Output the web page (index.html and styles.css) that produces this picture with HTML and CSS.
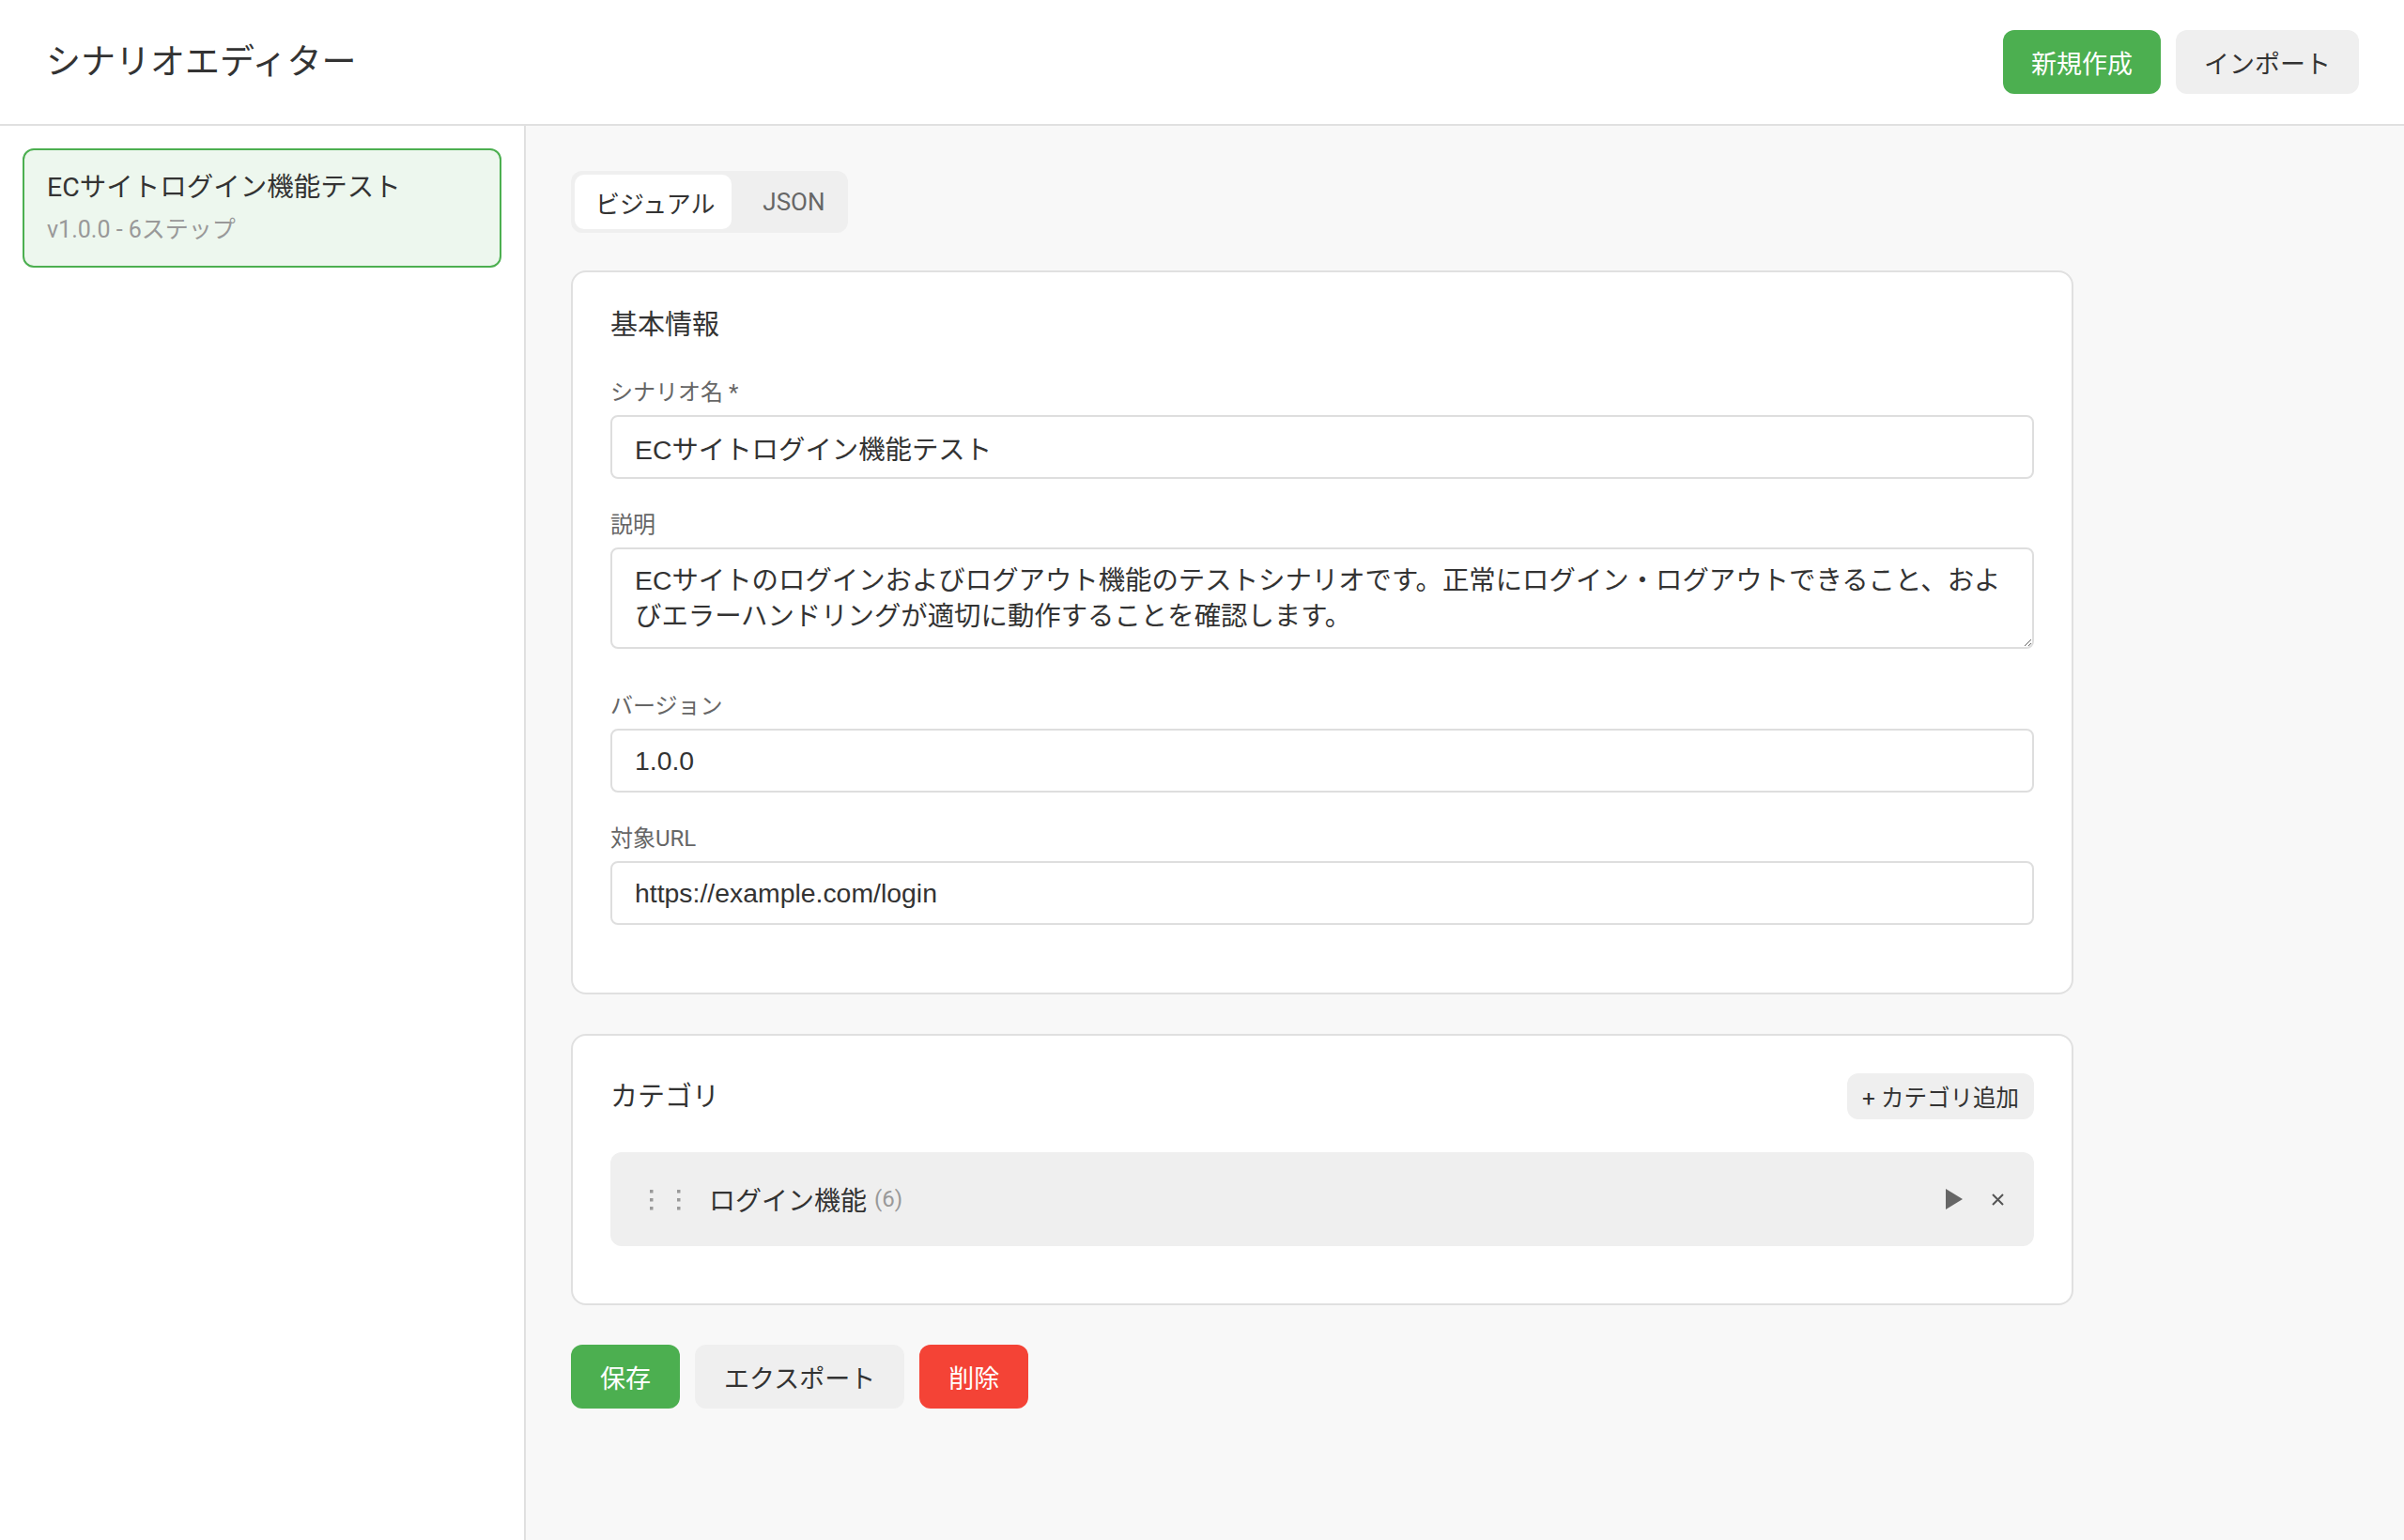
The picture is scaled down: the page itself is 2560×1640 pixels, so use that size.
FILE: index.html
```html
<!DOCTYPE html>
<html lang="ja">
<head>
<meta charset="utf-8">
<title>シナリオエディター</title>
<link rel="stylesheet" href="styles.css">
</head>
<body>
<header class="topbar">
  <h1 class="app-title">シナリオエディター</h1>
  <div class="topbar-actions">
    <button class="btn btn-primary btn-top">新規作成</button>
    <button class="btn btn-secondary btn-top">インポート</button>
  </div>
</header>
<div class="layout">
  <aside class="sidebar">
    <div class="scenario-item active">
      <div class="scenario-name">ECサイトログイン機能テスト</div>
      <div class="scenario-meta">v1.0.0 - 6ステップ</div>
    </div>
  </aside>
  <main class="editor">
    <div class="tabs">
      <button class="tab active">ビジュアル</button>
      <button class="tab tab-json">JSON</button>
    </div>

    <section class="card">
      <h2 class="card-title">基本情報</h2>
      <div class="form-group">
        <label class="form-label">シナリオ名 *</label>
        <input class="form-input" type="text" value="ECサイトログイン機能テスト">
      </div>
      <div class="form-group form-group-text">
        <label class="form-label">説明</label>
        <textarea class="form-input form-textarea">ECサイトのログインおよびログアウト機能のテストシナリオです。正常にログイン・ログアウトできること、およびエラーハンドリングが適切に動作することを確認します。</textarea>
      </div>
      <div class="form-group">
        <label class="form-label">バージョン</label>
        <input class="form-input" type="text" value="1.0.0">
      </div>
      <div class="form-group">
        <label class="form-label">対象URL</label>
        <input class="form-input" type="text" value="https://example.com/login">
      </div>
    </section>

    <section class="card">
      <div class="card-header">
        <h2 class="card-title card-title-inline">カテゴリ</h2>
        <button class="btn-small">+ カテゴリ追加</button>
      </div>
      <div class="category-item">
        <svg class="drag-handle" width="36" height="26" viewBox="0 0 36 26" aria-hidden="true">
          <rect x="1" y="3" width="3.5" height="3.5" fill="#9a9a9a"/>
          <rect x="1" y="12" width="3.5" height="3.5" fill="#9a9a9a"/>
          <rect x="1" y="21" width="3.5" height="3.5" fill="#9a9a9a"/>
          <rect x="30" y="3" width="3.5" height="3.5" fill="#9a9a9a"/>
          <rect x="30" y="12" width="3.5" height="3.5" fill="#9a9a9a"/>
          <rect x="30" y="21" width="3.5" height="3.5" fill="#9a9a9a"/>
        </svg>
        <span class="category-name">ログイン機能</span>
        <span class="category-count">(6)</span>
        <span class="spacer"></span>
        <button class="icon-btn play-btn" aria-label="実行">
          <svg width="18" height="22" viewBox="0 0 18 22"><polygon points="0,0 18,11 0,22" fill="#666"/></svg>
        </button>
        <button class="icon-btn close-btn" aria-label="削除">
          <svg width="13" height="13" viewBox="0 0 13 13"><path d="M1 1 L12 12 M12 1 L1 12" stroke="#555" stroke-width="2" fill="none"/></svg>
        </button>
      </div>
    </section>

    <div class="actions">
      <button class="btn btn-primary">保存</button>
      <button class="btn btn-secondary">エクスポート</button>
      <button class="btn btn-danger">削除</button>
    </div>
  </main>
</div>
</body>
</html>
```

FILE: styles.css
```css
* {
  box-sizing: border-box;
}

html, body {
  margin: 0;
  padding: 0;
  height: 100%;
}

body {
  font-family: "Roboto", "Noto Sans CJK JP", sans-serif;
  color: #333;
  background: #f8f8f8;
  display: flex;
  flex-direction: column;
}

button {
  font-family: inherit;
  cursor: pointer;
}

.topbar {
  flex: 0 0 auto;
  height: 134px;
  padding: 0 48px 0 49px;
  background: #fff;
  border-bottom: 2px solid #e0e0e0;
  display: flex;
  align-items: center;
  justify-content: space-between;
}

.app-title {
  margin: 0 0 6px;
  font-size: 37px;
  font-weight: 400;
  color: #333;
}

.topbar-actions {
  display: flex;
  gap: 16px;
}

.btn {
  height: 68px;
  padding: 0 31px;
  font-size: 27px;
  border: none;
  border-radius: 12px;
  color: #333;
}

.btn-top {
  padding: 0 30px;
}

.btn-primary {
  background: #4caf50;
  color: #fff;
}

.btn-secondary {
  background: #efefef;
  color: #333;
}

.btn-danger {
  background: #f44336;
  color: #fff;
}

.layout {
  flex: 1 1 auto;
  display: flex;
  min-height: 0;
}

.sidebar {
  flex: 0 0 560px;
  background: #fff;
  border-right: 2px solid #e0e0e0;
  padding: 24px;
}

.scenario-item {
  border: 2px solid #e0e0e0;
  border-radius: 12px;
  padding: 20px 24px 21px;
}

.scenario-item.active {
  border-color: #4caf50;
  background: #edf7ee;
}

.scenario-name {
  font-size: 28.5px;
  line-height: 40px;
  color: #333;
}

.scenario-meta {
  margin-top: 7px;
  font-size: 25px;
  line-height: 35px;
  color: #999;
}

.editor {
  flex: 1 1 auto;
  padding: 48px;
  background: #f8f8f8;
}

.tabs {
  display: inline-flex;
  gap: 4px;
  padding: 4px;
  background: #efefef;
  border-radius: 12px;
  margin-bottom: 40px;
}

.tab {
  height: 58px;
  padding: 0 18px 0 22px;
  font-size: 26px;
  border: none;
  border-radius: 10px;
  background: transparent;
  color: #666;
}

.tab-json {
  width: 116px;
  padding: 0 0 0 8px;
}

.tab.active {
  background: #fff;
  color: #333;
}

.card {
  width: 1600px;
  background: #fff;
  border: 2px solid #e0e0e0;
  border-radius: 16px;
  padding: 40px;
  margin-bottom: 42px;
}

.card-title {
  margin: 0 0 39px;
  font-size: 29px;
  line-height: 32px;
  font-weight: 400;
  color: #333;
}

.card-title-inline {
  margin: 0;
}

.form-group {
  margin-bottom: 32px;
}

.form-group-text {
  margin-bottom: 44px;
}

.form-label {
  display: block;
  font-size: 24px;
  line-height: 35px;
  color: #666;
  margin-bottom: 6px;
}

.form-input {
  display: block;
  width: 100%;
  height: 68px;
  padding: 0 24px;
  font-family: "Liberation Sans", "Noto Sans CJK JP", sans-serif;
  font-size: 28.4px;
  color: #333;
  background: #fff;
  border: 2px solid #dedede;
  border-radius: 8px;
  outline: none;
}

.form-textarea {
  height: 108px;
  padding: 14px 24px;
  line-height: 38px;
  resize: vertical;
}

.card-header {
  display: flex;
  align-items: center;
  justify-content: space-between;
  margin-bottom: 35px;
}

.btn-small {
  height: 49px;
  padding: 0 16px;
  font-size: 24.5px;
  border: none;
  border-radius: 12px;
  background: #efefef;
  color: #333;
}

.category-item {
  display: flex;
  align-items: center;
  height: 100px;
  padding: 0 32px 0 41px;
  background: #efefef;
  border-radius: 12px;
  margin-bottom: 21px;
}

.drag-handle {
  display: block;
  margin-right: 28px;
}

.category-name {
  font-size: 28px;
  color: #333;
}

.category-count {
  margin-left: 8px;
  font-size: 24px;
  color: #999;
}

.spacer {
  flex: 1 1 auto;
}

.icon-btn {
  display: flex;
  align-items: center;
  justify-content: center;
  padding: 0;
  border: none;
  background: transparent;
}

.play-btn {
  margin-right: 31px;
}

.actions {
  display: flex;
  gap: 16px;
}
```
